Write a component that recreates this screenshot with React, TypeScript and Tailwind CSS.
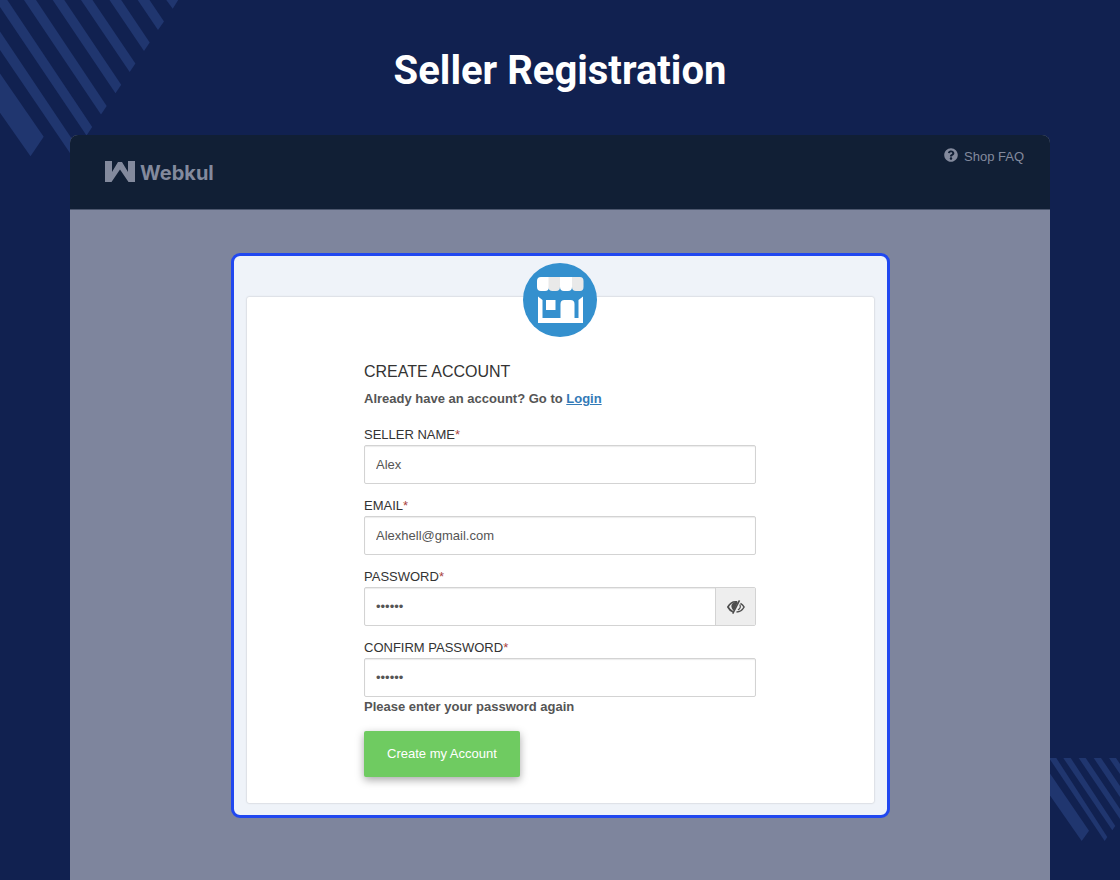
import { useState } from "react";
import type { InputHTMLAttributes, ReactNode } from "react";
import { FaQuestionCircle } from "react-icons/fa";

const StripesTop = () => (
  <svg
    className="absolute left-0 top-0"
    width="180"
    height="160"
    viewBox="0 0 180 160"
    fill="#20366f"
    aria-hidden="true"
  >
    <path d="M0 73.5 43.7 136.7 30.5 156.3 0 112.7Z" />
    <path d="M0 31.5 77.7 147.4 72 156 0 50Z" />
    <path d="M-4.7 0H7.3L92.2 127 86.5 135.6Z" />
    <path d="M24 0H36L106.7 106 101 114.5Z" />
    <path d="M52.7 0H64.3L121.2 84.8 115.5 93.3Z" />
    <path d="M81 0H92.5L135.4 63.5 129.7 72Z" />
    <path d="M109.5 0H121.2L149.7 42.5 144 51Z" />
    <path d="M137.7 0H149.5L164 21.5 158 30Z" />
    <path d="M166.3 0H178.2L172.7 8.7Z" />
  </svg>
);

const StripesBottom = () => (
  <svg
    className="absolute right-0 bottom-[39px]"
    width="70"
    height="83"
    viewBox="0 0 70 83"
    fill="#20366f"
    aria-hidden="true"
  >
    <path d="M0 15.5 39 72.7 31.7 83 0 37.5Z" />
    <path d="M-1 0H6.3L57.3 79 54.7 83Z" />
    <path d="M13.3 0H20.7L65.3 68 62.3 72.3Z" />
    <path d="M28.7 0H35.7L70 51V61Z" />
    <path d="M43.7 0H51L70 28V39Z" />
    <path d="M59 0H66L70 6V16Z" />
  </svg>
);

const StoreIcon = () => (
  <svg width="74" height="74" viewBox="0 0 74 74" aria-hidden="true">
    <circle cx="37" cy="37" r="37" fill="#3490ce" />
    <path
      fill="#fff"
      d="M15 33.500 19.500 37V55H37.500V41Q37.500 37 41.500 37H47.500Q51.500 37 51.500 41V55H55.500V37L60 33.500V60H15Z"
    />
    <path fill="#fff" d="M23 37H32.500V47H23Z" />
    <path
      fill="#fff"
      d="M18 14H26V24Q26 28 22 28H18Q14 28 14 24V18Q14 14 18 14ZM37 14H49V24Q49 28 45 28H41Q37 28 37 24Z"
    />
    <path
      fill="#e9e9e9"
      d="M25.5 14H37V24Q37 28 33 28H29.5Q25.5 28 25.5 24ZM49 14H57Q60.500 14 60.500 18V24Q60.500 28 57 28H53Q49 28 49 24Z"
    />
  </svg>
);

const EyeClosedIcon = () => (
  <svg width="18" height="14" viewBox="0 0 18 14" fill="none" aria-hidden="true">
    <path
      d="M10.200 1.900C5.800 1.100 2.500 4 .9 7c1 1.900 2.700 3.800 5 4.700"
      stroke="#4d4d4d"
      strokeWidth="1.700"
    />
    <path
      d="M13.500 3.300c1.600.9 2.800 2.200 3.600 3.700-1.500 2.800-4.200 4.900-7.600 5.100"
      stroke="#4d4d4d"
      strokeWidth="1.500"
    />
    <path d="M10.800 2.300C6.500 1.300 4.300 4 4.400 6.500c.1 1.900 1.100 3.300 2.600 4.100Z" fill="#4d4d4d" />
    <path d="M12.800 4.500c.9 1.900.4 4.200-1.900 5.400" stroke="#4d4d4d" strokeWidth="1.200" />
    <path d="M12.500.4 5.700 13.600" stroke="#4d4d4d" strokeWidth="1.600" />
  </svg>
);

const Logo = () => (
  <a href="#" className="flex items-start gap-[5px] text-[#838a9d]">
    <svg width="30" height="21" viewBox="0 0 30 21" fill="currentColor" aria-hidden="true">
      <path d="M0 0H7V11L13 1H17L23 11V0H30V21H23.500L15 8.500 6.500 21H0Z" />
    </svg>
    <span className="font-[Inter] text-[20px] leading-6 font-bold">Webkul</span>
  </a>
);

type FieldProps = InputHTMLAttributes<HTMLInputElement> & {
  id: string;
  label: string;
  addon?: ReactNode;
};

const Field = ({ id, label, addon, ...props }: FieldProps) => (
  <div>
    <label htmlFor={id} className="block leading-5 text-[#333]">
      {label}
      <span className="text-[#a94442]">*</span>
    </label>
    <div className="flex h-[39px] rounded-xs border border-[#d3d3d3] bg-white shadow-[inset_0_1px_1px_rgba(0,0,0,0.08)]">
      <input
        id={id}
        className="min-w-0 flex-1 bg-transparent px-[11px] text-[#555] focus:outline-none"
        {...props}
      />
      {addon}
    </div>
  </div>
);

const RegistrationForm = () => {
  const [visible, setVisible] = useState(false);

  return (
    <form
      className="mx-auto w-full max-w-[392px] text-[13px]"
      onSubmit={(e) => e.preventDefault()}
    >
      <h2 className="text-base leading-6 text-[#333]">CREATE ACCOUNT</h2>
      <p className="mt-[3px] leading-6 font-bold text-[#555]">
        Already have an account? Go to{" "}
        <a href="#" className="text-[#337ab7] underline">
          Login
        </a>
      </p>
      <div className="mt-[14px] flex flex-col gap-3">
        <Field id="name" label="SELLER NAME" type="text" defaultValue="Alex" />
        <Field id="email" label="EMAIL" type="email" defaultValue="Alexhell@gmail.com" />
        <Field
          id="password"
          label="PASSWORD"
          type={visible ? "text" : "password"}
          defaultValue="secret"
          addon={
            <button
              type="button"
              aria-label="Toggle password"
              className="flex w-10 items-center justify-center border-l border-[#d3d3d3] bg-[#eee]"
              onClick={() => setVisible(!visible)}
            >
              <EyeClosedIcon />
            </button>
          }
        />
        <Field id="confirm" label="CONFIRM PASSWORD" type="password" defaultValue="secret" />
      </div>
      <p className="leading-5 font-bold text-[#555]">Please enter your password again</p>
      <button
        type="submit"
        className="mt-[14px] h-[46px] rounded-xs bg-[#6fcb61] px-[23px] text-white shadow-[0_3px_8px_rgba(0,0,0,0.35)]"
      >
        Create my Account
      </button>
    </form>
  );
};

export default function App() {
  return (
    <div className="relative flex min-h-screen flex-col bg-[#112150] px-[70px] font-['Liberation_Sans',Arial,sans-serif]">
      <StripesTop />
      <StripesBottom />
      <h1 className="relative pt-[47px] pb-10 text-center font-[Roboto,sans-serif] text-[40px] leading-12 font-bold text-white">
        Seller Registration
      </h1>
      <div className="relative flex flex-1 flex-col overflow-hidden rounded-t-lg bg-[#7e859d]">
        <header className="flex items-start justify-between border-b border-[#4c566d] bg-[#111f35] pt-3 pr-[26px] pb-6 pl-[35px]">
          <div className="pt-[14px]">
            <Logo />
          </div>
          <a href="#" className="flex items-center gap-[6px] text-[13px] leading-5 text-[#838a9d]">
            <FaQuestionCircle className="mb-1 size-[14px]" />
            Shop FAQ
          </a>
        </header>
        <main className="px-4 pt-[43px] pb-[62px]">
          <section className="mx-auto max-w-[659px] rounded-[9px] border-3 border-[#2148f0] bg-[#eff3f9] px-[13px] pt-[41px] pb-3">
            <div className="flex flex-col rounded-xs bg-white px-4 pb-[26px] shadow-[0_0_2px_rgba(0,0,0,0.25)]">
              <div className="-mt-[34px] mb-[23px] flex justify-center">
                <StoreIcon />
              </div>
              <RegistrationForm />
            </div>
          </section>
        </main>
      </div>
    </div>
  );
}
